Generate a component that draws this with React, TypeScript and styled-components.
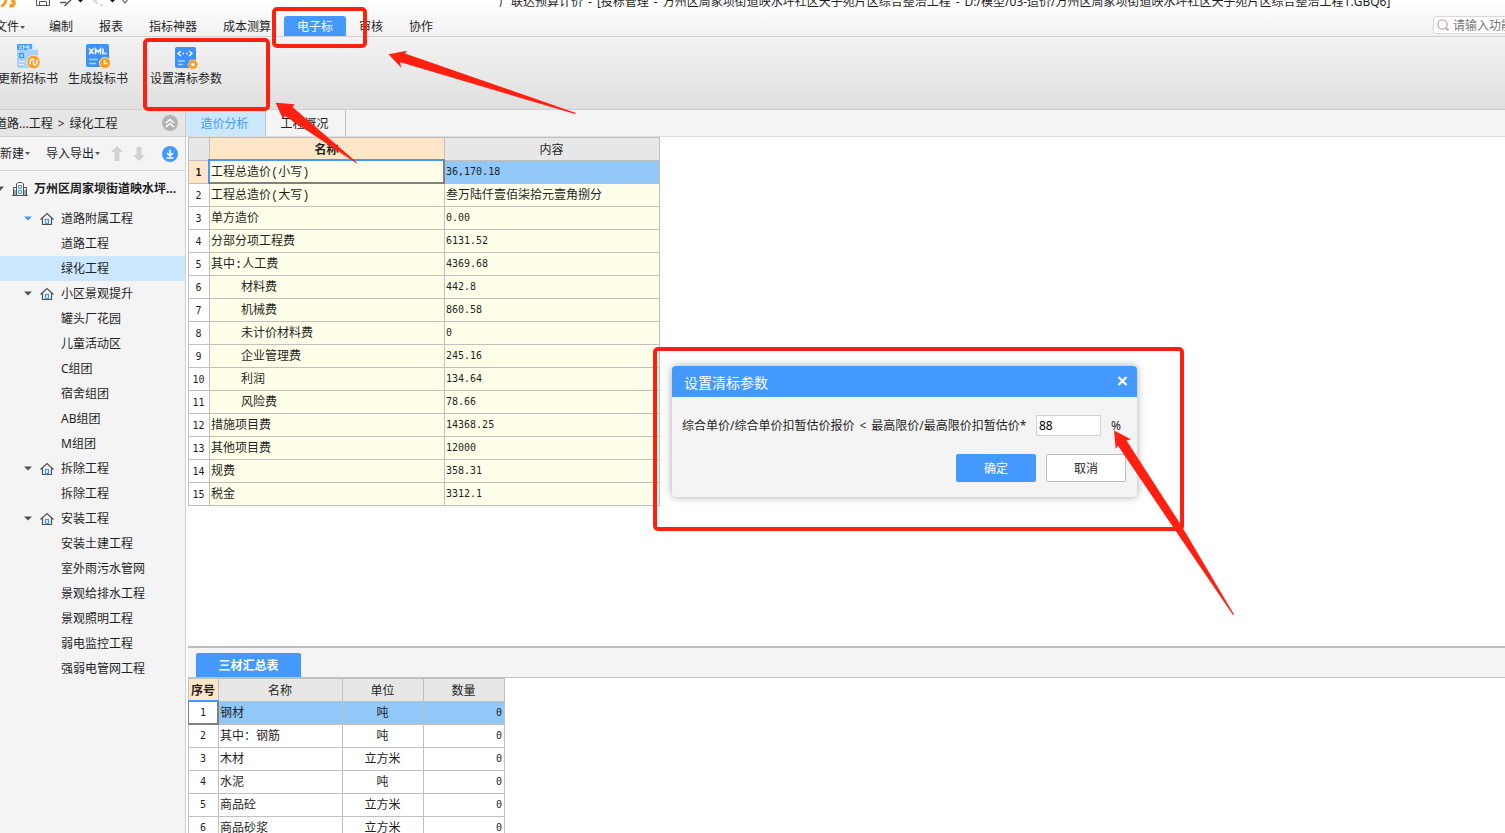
import React from "react";
import styled, { createGlobalStyle } from "styled-components";

const BLUE = "#4499ff";
const LINE = "#c0c0c0";
const RED = "#ff2012";

const GlobalStyle = createGlobalStyle`
  *, *::before, *::after { box-sizing: border-box; }
  body {
    margin: 0;
    background: #fff;
    color: #1f1f1f;
    font: 12px/16px "Noto Sans", "Noto Sans CJK SC", sans-serif;
    overflow: hidden;
  }
  button, input {
    font: inherit;
    color: inherit;
    margin: 0;
  }
  button {
    border: 0;
    padding: 0;
    background: none;
    white-space: nowrap;
  }
  svg { display: block; flex: none; }
`;

const Page = styled.div`
  position: relative;
  display: flex;
  flex-direction: column;
  height: 100vh;
  overflow: hidden;
`;

const Header = styled.header`
  flex: none;
  background: linear-gradient(#ffffff, #f1f1f1);
  border-bottom: 1px solid #d2d2d2;
`;

const TitleBar = styled.div`
  display: flex;
  height: 16px;
  overflow: hidden;
`;

const WindowTitle = styled.div`
  display: flex;
  flex: 1;
  gap: 5px;
  margin: -6px 0 0 367px;
  white-space: nowrap;
`;

const MenuBar = styled.div`
  display: flex;
  justify-content: space-between;
  height: 20px;
  overflow: hidden;
`;

const Menu = styled.nav`
  display: flex;
  flex: none;
  margin-left: -18px;
`;

const MenuItem = styled.button<{ $active?: boolean }>`
  display: flex;
  align-items: center;
  gap: 1px;
  height: 20px;
  padding: 2px 13px 0;
  border-radius: 3px 3px 0 0;
  color: ${(p) => (p.$active ? "#fff" : "inherit")};
  background: ${(p) => (p.$active ? BLUE : "none")};
`;

const FileItem = styled(MenuItem)`
  padding-right: 11px;
`;

const Search = styled.label`
  display: flex;
  align-items: center;
  gap: 4px;
  width: 172px;
  height: 18px;
  margin-right: -100px;
  padding-left: 3px;
  flex: none;
  border: 1px solid #d8d8d8;
  border-radius: 3px;
  background: #fff;
`;

const SearchInput = styled.input`
  width: 140px;
  height: 16px;
  padding: 1px 0 0;
  border: 0;
  outline: 0;
  background: none;
  &::placeholder { color: #777; opacity: 1; }
`;

const Ribbon = styled.div`
  display: flex;
  flex: none;
  gap: 10px;
  height: 73px;
  padding-top: 7px;
  background: linear-gradient(#f3f3f3, #dfdfdf);
  border-bottom: 1px solid #cfcfcf;
`;

const RibbonGroup = styled.div`
  display: flex;
  gap: 10px;
  margin-left: -2px;
  padding-right: 12px;
`;

const RibbonButton = styled.button`
  display: flex;
  flex-direction: column;
  align-items: center;
  align-self: flex-start;
  gap: 1px;
`;

const Body = styled.div`
  display: flex;
  flex: 1;
  min-height: 0;
`;

const Sidebar = styled.aside`
  flex: none;
  width: 186px;
  overflow: hidden;
  background: #f4f4f4;
  border-right: 1px solid #d0d0d0;
`;

const Crumbs = styled.div`
  display: flex;
  align-items: center;
  justify-content: space-between;
  height: 27px;
  padding-right: 7px;
  background: #e6e6e6;
  border-bottom: 1px solid #d4d4d4;
`;

const CrumbText = styled.div`
  display: flex;
  gap: 5px;
  margin-left: -5px;
  padding-top: 2px;
`;

const SideTools = styled.div`
  display: flex;
  align-items: center;
  height: 34px;
  padding-right: 7px;
  border-bottom: 1px solid #d4d4d4;
`;

const ToolButton = styled.button<{ $gap?: number }>`
  display: flex;
  align-items: center;
  gap: 1px;
  margin-right: ${(p) => p.$gap ?? 0}px;
`;

const Spacer = styled.div`
  flex: 1;
`;

const Tree = styled.ul`
  margin: 0;
  padding: 0;
  list-style: none;
`;

const TreeRow = styled.button<{ $level: number; $selected?: boolean }>`
  display: flex;
  align-items: center;
  gap: ${(p) => (p.$level === 0 ? 6 : 7)}px;
  width: 100%;
  height: ${(p) => (p.$level === 0 ? 35 : 25)}px;
  padding-left: ${(p) => [0, 23, 61][p.$level]}px;
  font-weight: ${(p) => (p.$level === 0 ? 700 : 400)};
  background: ${(p) => (p.$selected ? "#cce8ff" : "none")};
`;

const Main = styled.main`
  display: flex;
  flex: 1;
  flex-direction: column;
  min-width: 0;
`;

const Tabs = styled.div`
  display: flex;
  flex: none;
  height: 27px;
  background: #f4f4f4;
  border-bottom: 1px solid #dcdcdc;
`;

const Tab = styled.button<{ $active?: boolean }>`
  width: 80px;
  padding: 2px 2px 0 0;
  border-right: 1px solid ${LINE};
  color: ${(p) => (p.$active ? BLUE : "inherit")};
  background: ${(p) => (p.$active ? "#cce8ff" : "none")};
`;

const Upper = styled.section`
  flex: 1;
  min-height: 0;
  padding-left: 2px;
`;

const Lower = styled.section`
  flex: none;
  height: 187px;
  margin-left: 2px;
  overflow: hidden;
  border-top: 2px solid #bdbdbd;
`;

const LowerTabs = styled.div`
  display: flex;
  align-items: flex-end;
  height: 30px;
  padding-left: 8px;
  background: #f4f4f4;
  border-bottom: 1px solid ${LINE};
`;

const LowerTab = styled.button`
  width: 105px;
  height: 24px;
  padding-top: 2px;
  border-radius: 2px 2px 0 0;
  background: ${BLUE};
  color: #fff;
  font-weight: 700;
`;

const Grid = styled.table<{ $width: number }>`
  width: ${(p) => p.$width}px;
  table-layout: fixed;
  border-spacing: 0;
  border-top: 1px solid ${LINE};
  border-left: 1px solid ${LINE};
  font-family: "Liberation Mono", "Noto Sans CJK SC", monospace;
`;

type CellLook = {
  $tone?: string;
  $align?: string;
  $indent?: boolean;
  $num?: boolean;
  $bold?: boolean;
  $raised?: boolean;
};

const Cell = styled.td<CellLook>`
  height: 23px;
  padding: ${(p) => (p.$raised ? 0 : 2)}px 2px 0 ${(p) => (p.$indent ? 31 : 1)}px;
  border-right: 1px solid ${LINE};
  border-bottom: 1px solid ${LINE};
  background: ${(p) => p.$tone ?? "#fff"};
  font-family: ${(p) => (p.$num ? '"DejaVu Sans Mono", monospace' : "inherit")};
  font-size: ${(p) => (p.$num ? 10 : 12)}px;
  font-weight: ${(p) => (p.$bold ? 700 : 400)};
  line-height: 16px;
  text-align: ${(p) => p.$align ?? "left"};
  white-space: nowrap;
`;

const HeadCell = styled(Cell).attrs({ as: "th", scope: "col" })`
  padding: 4px 1px 0 0;
  text-align: center;
`;

const FocusCell = styled(Cell)<{ $leftTone: string }>`
  position: relative;
  &::after {
    content: "";
    position: absolute;
    inset: -2px -1px -1px -2px;
    border: 2px solid #808080;
    border-top-color: ${BLUE};
    border-left-color: ${(p) => p.$leftTone};
  }
`;

const Dialog = styled.section`
  position: absolute;
  left: 672px;
  top: 366px;
  width: 465px;
  border-radius: 4px;
  background: #f4f4f4;
  box-shadow: 0 0 8px rgba(0, 0, 0, 0.35);
`;

const DialogHead = styled.div`
  display: flex;
  align-items: center;
  justify-content: space-between;
  height: 31px;
  padding: 0 9px 0 12px;
  border-radius: 4px 4px 0 0;
  background: ${BLUE};
  color: #fff;
`;

const DialogTitle = styled.div`
  padding-top: 2px;
  font-size: 14px;
`;

const DialogForm = styled.form`
  padding: 18px 11px 15px 10px;
`;

const Field = styled.label`
  display: flex;
  align-items: center;
  white-space: nowrap;
`;

const FieldText = styled.span`
  display: flex;
  flex: 1;
  gap: 5px;
`;

const PercentInput = styled.input`
  width: 65px;
  height: 21px;
  padding: 0 2px;
  border: 1px solid #d2d2d2;
  outline: 0;
  background: #fff;
  color: #000;
`;

const Unit = styled.span`
  width: 25px;
  padding-left: 10px;
`;

const Actions = styled.div`
  display: flex;
  justify-content: flex-end;
  gap: 10px;
  margin-top: 18px;
`;

const ActionButton = styled.button<{ $primary?: boolean }>`
  width: 80px;
  height: 28px;
  padding-top: 1px;
  border: 1px solid ${(p) => (p.$primary ? BLUE : "#bdbdbd")};
  border-radius: 2px;
  background: ${(p) => (p.$primary ? BLUE : "#fff")};
  color: ${(p) => (p.$primary ? "#fff" : "inherit")};
`;

const Marks = styled.svg`
  position: absolute;
  left: 0;
  top: 0;
  overflow: visible;
  pointer-events: none;
`;

const Caret = ({ color = "#555", wide = false }: { color?: string; wide?: boolean }) =>
  wide ? (
    <svg width="10" height="5" viewBox="0 0 10 5">
      <path d="M1 0.5H9L5 4.500Z" fill={color} />
    </svg>
  ) : (
    <svg width="5" height="3" viewBox="0 0 5 3">
      <path d="M0 0H5L2.5 3Z" fill={color} />
    </svg>
  );

const QuickIcons = () => (
  <svg width="132" height="10" viewBox="0 0 132 10" fill="none">
    <path d="M1 6.200Q5 5 6 0" stroke="#ff9a1f" strokeWidth="2.600" />
    <path d="M9.500 5.500Q14 6.500 14 2.500Q14 1 11.500 0" stroke="#ff9a1f" strokeWidth="3.600" />
    <path d="M36.500 0V5.500H49.500V0M39.500 5V1.500H46.500V5" stroke="#555" />
    <path d="M60 2.500H66.500M64.500 6L71 0" stroke="#555" strokeWidth="1.500" />
    <path d="M78 0H83L80.500 2.500Z" fill="#111" />
    <path d="M97 0L94 1L98 4M100 5H103" stroke="#d4d4d4" strokeWidth="1.500" />
    <path d="M110 0H115L112.500 2.500Z" fill="#111" />
    <path d="M122.500 0L125 3L127.500 0" stroke="#777" strokeWidth="1.300" />
  </svg>
);

const SearchIcon = () => (
  <svg width="12" height="12" viewBox="0 0 12 12" fill="none" stroke="#b5b5b5" strokeWidth="1.400">
    <circle cx="5.500" cy="5.500" r="4.600" />
    <path d="M8.500 8.500L11.500 11.500" strokeWidth="2" />
  </svg>
);

const UpdateIcon = () => (
  <svg width="24" height="26" viewBox="0 0 24 26" fill="none">
    <path d="M1 0H16L22 6V24H3Q1 24 1 22Z" fill="#a6d2ff" />
    <path d="M2 0H16V6H1V1Q1 0 2 0Z" fill="#4b9eff" />
    <path d="M16 0L22 6H16Z" fill="#d8ebff" />
    <path d="M3 1.500L6 5.500M6 1.500L3 5.500M7.500 5.500V1.500L9.500 4L11.500 1.500V5.500M13 1.500V5.500H16" stroke="#d9edff" />
    <rect x="3.500" y="9.500" width="4" height="4" stroke="#3f95fa" strokeWidth="1.300" />
    <path d="M3 17.500H9M3 20.500H8" stroke="#e6f3ff" />
    <circle cx="17.500" cy="18" r="6.700" fill="#ff9a1a" stroke="#f3e9dc" />
    <path d="M14.300 20.500Q13.300 16 16.500 15Q17.800 15 17.500 18Q17.300 21 18.800 21Q21.700 20 20.700 15.500" stroke="#fff" strokeWidth="1.500" />
  </svg>
);

const CreateIcon = () => (
  <svg width="24" height="26" viewBox="0 0 24 26" fill="none">
    <rect x="0" y="0" width="23" height="23" rx="2" fill="#3d92f8" />
    <path d="M3 4.500L7.500 10M7.500 4.500L3 10M9.500 10.300V5L12 8L14.500 5V10.300M17 4.500V9.500H20.500" stroke="#fff" strokeWidth="1.500" />
    <path d="M3 15.500H12M3 19.500H10" stroke="#a8d0ff" strokeWidth="1.300" />
    <circle cx="19" cy="19" r="5.500" fill="#ff9a1a" stroke="#f4e3cb" />
    <path d="M18.500 16V19.500H21.500" stroke="#fff" strokeWidth="1.400" />
  </svg>
);

const ParamIcon = () => (
  <svg width="24" height="26" viewBox="0 0 24 26" fill="none">
    <rect x="1" y="3" width="21" height="21" rx="2" fill="#3d92f8" />
    <path d="M7 7L4 9.500L7 12M15 7L18 9.500L15 12" stroke="#fff" strokeWidth="1.400" />
    <path d="M8.500 9.500H10M12 9.500H13.500" stroke="#fff" strokeWidth="1.500" />
    <path d="M4 17H11M4 20.500H9" stroke="#a8d0ff" strokeWidth="1.300" />
    <path d="M16.500 16H21.500L24 20.500L21.500 25H16.500L14 20.500Z" fill="#ff9a1a" stroke="#f4e3cb" strokeWidth="0.600" />
    <circle cx="19" cy="20.500" r="1.700" fill="#fff" />
  </svg>
);

const CollapseIcon = () => (
  <svg width="16" height="16" viewBox="0 0 16 16" fill="none">
    <circle cx="8" cy="8" r="8" fill="#b3b3b3" />
    <path d="M4 8L8 4.500L12 8M4 12L8 8.500L12 12" stroke="#fff" strokeWidth="1.500" />
  </svg>
);

const DownloadIcon = () => (
  <svg width="16" height="16" viewBox="0 0 16 16" fill="none">
    <circle cx="8" cy="8" r="8" fill={BLUE} />
    <path d="M8 3.500V10M5 7L8 10L11 7M4.500 12H11.500" stroke="#fff" strokeWidth="1.500" />
  </svg>
);

const MoveIcon = ({ down = false }: { down?: boolean }) => (
  <svg width="12" height="16" viewBox="0 0 12 16">
    <path
      d={down ? "M3.500 1H8.500V9H12L6 15L0 9H3.500Z" : "M6 0L12 6H8.500V15H3.500V6H0Z"}
      fill="#d2d2d2"
    />
  </svg>
);

const HouseIcon = () => (
  <svg width="14" height="14" viewBox="0 0 14 14" fill="none">
    <path d="M0.500 7.500L7 1.500L13.500 7.500M2.500 6.500V12.500H11.500V6.500" stroke="#505050" strokeWidth="1.200" />
    <rect x="5.500" y="7.500" width="3" height="4" stroke={BLUE} strokeWidth="1.200" />
  </svg>
);

const BuildingIcon = () => (
  <svg width="16" height="16" viewBox="0 0 16 16" fill="none">
    <path d="M0 14.500H16M1.500 14V6.500H4.500M14.500 14V6.500H11.500M4.500 14V3L6 1.500H10L11.500 3V14M3 9V14M13 9V14" stroke="#505050" />
    <path d="M6.500 4.500H9.500V7.500H6.500ZM6.500 9.500H9.500V12.500H6.500Z" stroke={BLUE} />
  </svg>
);

const CloseIcon = () => (
  <svg width="11" height="12" viewBox="0 0 11 12">
    <path d="M1.500 1L9.500 9M9.500 1L1.500 9" stroke="#fff" strokeWidth="2.200" />
  </svg>
);

const menus = ["编制", "报表", "指标神器", "成本测算", "电子标", "审核", "协作"];

const tree: { name: string; items: string[] }[] = [
  { name: "道路附属工程", items: ["道路工程", "绿化工程"] },
  { name: "小区景观提升", items: ["罐头厂花园", "儿童活动区", "C组团", "宿舍组团", "AB组团", "M组团"] },
  { name: "拆除工程", items: ["拆除工程"] },
  {
    name: "安装工程",
    items: ["安装土建工程", "室外雨污水管网", "景观给排水工程", "景观照明工程", "弱电监控工程", "强弱电管网工程"],
  },
];

const costs: { name: string; value: string; sub?: boolean }[] = [
  { name: "工程总造价(小写)", value: "36,170.18" },
  { name: "工程总造价(大写)", value: "叁万陆仟壹佰柒拾元壹角捌分" },
  { name: "单方造价", value: "0.00" },
  { name: "分部分项工程费", value: "6131.52" },
  { name: "其中:人工费", value: "4369.68" },
  { name: "材料费", value: "442.8", sub: true },
  { name: "机械费", value: "860.58", sub: true },
  { name: "未计价材料费", value: "0", sub: true },
  { name: "企业管理费", value: "245.16", sub: true },
  { name: "利润", value: "134.64", sub: true },
  { name: "风险费", value: "78.66", sub: true },
  { name: "措施项目费", value: "14368.25" },
  { name: "其他项目费", value: "12000" },
  { name: "规费", value: "358.31" },
  { name: "税金", value: "3312.1" },
];

const materials = [
  ["钢材", "吨"],
  ["其中：钢筋", "吨"],
  ["木材", "立方米"],
  ["水泥", "吨"],
  ["商品砼", "立方米"],
  ["商品砂浆", "立方米"],
];

const PEACH = "#ffe6c8";
const HEAD = "#e7e7e7";
const PICK = "#91c8f7";
const CREAM = "#ffffe9";

const CostTable = () => (
  <Grid $width={472}>
    <colgroup>
      <col width="21" />
      <col width="235" />
      <col width="215" />
    </colgroup>
    <thead>
      <tr>
        <HeadCell $tone={HEAD} aria-label="行号" />
        <HeadCell $tone={PEACH} $bold>名称</HeadCell>
        <HeadCell $tone={HEAD}>内容</HeadCell>
      </tr>
    </thead>
    <tbody>
      {costs.map((c, i) => {
        const numeric = /^[\d.,]+$/.test(c.value);
        return (
          <tr key={i}>
            <Cell $tone={i === 0 ? PEACH : "#fff"} $num $align="center" $bold={i === 0}>{i + 1}</Cell>
            {i === 0 ? (
              <FocusCell $tone={CREAM} $leftTone={BLUE}>{c.name}</FocusCell>
            ) : (
              <Cell $tone={CREAM} $indent={c.sub}>{c.name}</Cell>
            )}
            <Cell $tone={i === 0 ? PICK : CREAM} $num={numeric} $raised={numeric}>{c.value}</Cell>
          </tr>
        );
      })}
    </tbody>
  </Grid>
);

const MaterialTable = () => (
  <Grid $width={317}>
    <colgroup>
      <col width="30" />
      <col width="124" />
      <col width="81" />
      <col width="81" />
    </colgroup>
    <thead>
      <tr>
        <HeadCell $tone={PEACH} $bold>序号</HeadCell>
        <HeadCell $tone={HEAD}>名称</HeadCell>
        <HeadCell $tone={HEAD}>单位</HeadCell>
        <HeadCell $tone={HEAD}>数量</HeadCell>
      </tr>
    </thead>
    <tbody>
      {materials.map(([name, unit], i) => {
        const tone = i === 0 ? PICK : "#fff";
        return (
          <tr key={name}>
            {i === 0 ? (
              <FocusCell $num $raised $align="center" $leftTone="#808080">1</FocusCell>
            ) : (
              <Cell $num $raised $align="center">{i + 1}</Cell>
            )}
            <Cell $tone={tone}>{name}</Cell>
            <Cell $tone={tone} $align="center">{unit}</Cell>
            <Cell $tone={tone} $align="right" $num $raised>0</Cell>
          </tr>
        );
      })}
    </tbody>
  </Grid>
);

export default function App() {
  return (
    <Page>
      <GlobalStyle />
      <Header>
        <TitleBar>
          <QuickIcons />
          <WindowTitle>
            <span>广联达预算计价</span>
            <span>-</span>
            <span>[投标管理</span>
            <span>-</span>
            <span>万州区周家坝街道映水坪社区天子苑片区综合整治工程</span>
            <span>-</span>
            <span>D:/模型/03-造价/万州区周家坝街道映水坪社区天子苑片区综合整治工程1.GBQ6]</span>
          </WindowTitle>
        </TitleBar>
        <MenuBar>
          <Menu>
            <FileItem>文件<Caret /></FileItem>
            {menus.map((m) => (
              <MenuItem key={m} $active={m === "电子标"}>{m}</MenuItem>
            ))}
          </Menu>
          <Search>
            <SearchIcon />
            <SearchInput aria-label="搜索功能" placeholder="请输入功能" />
          </Search>
        </MenuBar>
      </Header>

      <Ribbon>
        <RibbonGroup>
          <RibbonButton><UpdateIcon />更新招标书</RibbonButton>
          <RibbonButton><CreateIcon />生成投标书</RibbonButton>
        </RibbonGroup>
        <RibbonButton><ParamIcon />设置清标参数</RibbonButton>
      </Ribbon>

      <Body>
        <Sidebar>
          <Crumbs>
            <CrumbText>
              <span>道路...工程</span>
              <span>&gt;</span>
              <span>绿化工程</span>
            </CrumbText>
            <ToolButton aria-label="收起"><CollapseIcon /></ToolButton>
          </Crumbs>
          <SideTools>
            <ToolButton $gap={16}>新建<Caret /></ToolButton>
            <ToolButton $gap={11}>导入导出<Caret /></ToolButton>
            <ToolButton $gap={10} aria-label="上移"><MoveIcon /></ToolButton>
            <ToolButton aria-label="下移"><MoveIcon down /></ToolButton>
            <Spacer />
            <ToolButton aria-label="下载"><DownloadIcon /></ToolButton>
          </SideTools>
          <Tree>
            <li>
              <TreeRow $level={0}>
                <svg width="6" height="5" viewBox="2 0 6 5"><path d="M0 0.500H6L2 5Z" fill="#505050" /></svg>
                <BuildingIcon />
                万州区周家坝街道映水坪...
              </TreeRow>
            </li>
            {tree.map((group, g) => (
              <li key={group.name}>
                <TreeRow $level={1}>
                  <Caret wide color={g === 0 ? BLUE : "#505050"} />
                  <HouseIcon />
                  {group.name}
                </TreeRow>
                <Tree>
                  {group.items.map((item) => (
                    <li key={item}>
                      <TreeRow $level={2} $selected={item === "绿化工程"}>{item}</TreeRow>
                    </li>
                  ))}
                </Tree>
              </li>
            ))}
          </Tree>
        </Sidebar>

        <Main>
          <Tabs>
            <Tab $active>造价分析</Tab>
            <Tab>工程概况</Tab>
          </Tabs>
          <Upper>
            <CostTable />
          </Upper>
          <Lower>
            <LowerTabs>
              <LowerTab>三材汇总表</LowerTab>
            </LowerTabs>
            <MaterialTable />
          </Lower>
        </Main>
      </Body>

      <Dialog role="dialog" aria-label="设置清标参数">
        <DialogHead>
          <DialogTitle>设置清标参数</DialogTitle>
          <ToolButton aria-label="关闭"><CloseIcon /></ToolButton>
        </DialogHead>
        <DialogForm onSubmit={(e) => e.preventDefault()}>
          <Field>
            <FieldText>
              <span>综合单价/综合单价扣暂估价报价</span>
              <span>&lt;</span>
              <span>最高限价/最高限价扣暂估价*</span>
            </FieldText>
            <PercentInput defaultValue="88" />
            <Unit>%</Unit>
          </Field>
          <Actions>
            <ActionButton type="submit" $primary>确定</ActionButton>
            <ActionButton type="button">取消</ActionButton>
          </Actions>
        </DialogForm>
      </Dialog>

      <Marks width="1240" height="620" viewBox="0 0 1240 620" fill="none" aria-hidden="true">
        <g stroke={RED} strokeWidth="4">
          <rect x="274" y="9" width="91" height="37" rx="3" />
          <rect x="145" y="40" width="123" height="69" rx="3" />
          <rect x="655" y="349" width="527" height="180" rx="3" />
        </g>
        <g fill={RED}>
          <path d="M388.500 54.300L407 50.800L405 53.500L576 113L575 114L403 63L400 62.500L401.500 68Z" />
          <path d="M275.700 102.700L294.700 104.300L292.500 107L357 162.500L356 163L285 116L282.700 118.700Z" />
          <path d="M1114 430.500L1131 439.300L1126.500 440.400L1181 525L1234 614.500L1233 615L1173 527L1118 445.800L1115.700 448.700Z" />
        </g>
      </Marks>
    </Page>
  );
}
